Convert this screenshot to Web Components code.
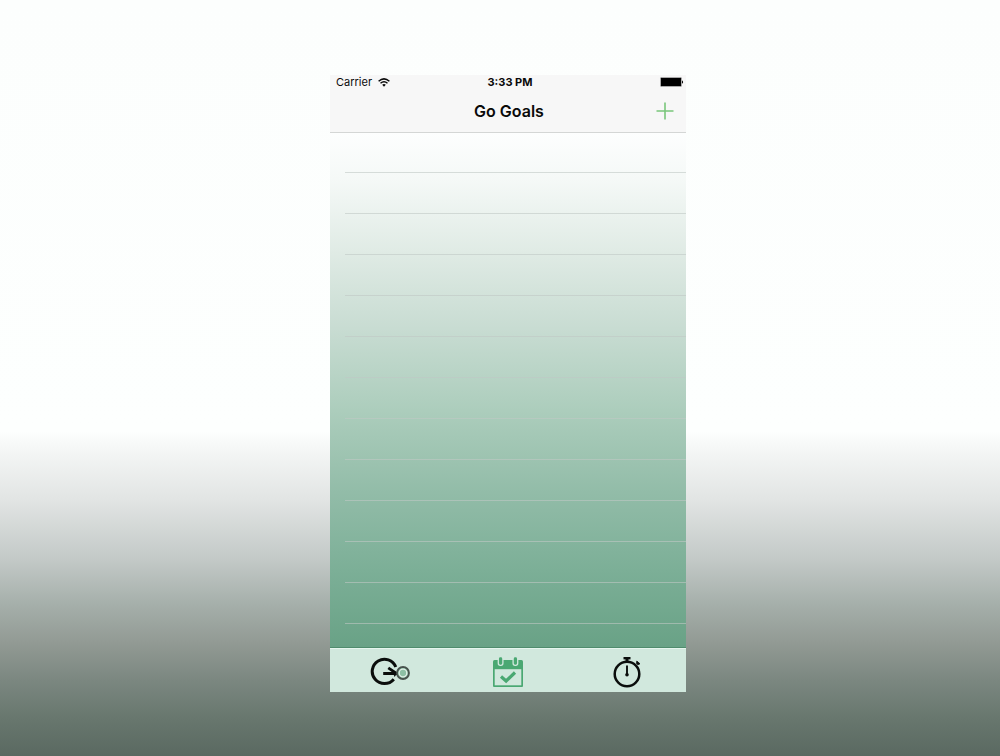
<!DOCTYPE html>
<html lang="en">
<head>
<meta charset="utf-8">
<meta name="viewport" content="width=device-width, initial-scale=1">
<title>Go Goals</title>
<style>
html { min-height: 100%; background: #fcfefd; }
body { margin: 0; min-height: 100vh; font-family: Inter, "Liberation Sans", sans-serif; color: #0a0a0a; }
</style>
</head>
<body>
<go-stage>
  <go-phone>
    <go-status slot="top" carrier="Carrier" time="3:33 PM"></go-status>
    <go-navbar slot="top">Go Goals</go-navbar>
    <go-list rows="12"></go-list>
    <go-tabbar slot="bottom"></go-tabbar>
  </go-phone>
</go-stage>
<script>
function define(name, render) {
  customElements.define(name, class extends HTMLElement {
    constructor() { super(); this.attachShadow({ mode: "open" }); }
    connectedCallback() { this.shadowRoot.innerHTML = render(this); }
  });
}

define("go-stage", () => `
<style>
:host { display: flex; justify-content: center; align-items: flex-start; box-sizing: border-box; min-height: 100vh; padding: 75px 0 64px 16px;
  background: linear-gradient(#fcfefd 0, #fdfffe 57%, #f3f5f4 60%, #e2e5e4 66%, #c3c9c7 74%, #a5afaa 80%, #929a94 85%, #7b8780 90%, #68776e 95%, #5a6961 100%); }
</style>
<slot></slot>`);

define("go-phone", () => `
<style>
:host { display: flex; flex-direction: column; width: 100%; max-width: 356px; }
header { background: #f7f7f7; border-bottom: 1px solid #d4d6d5; }
main { flex: 1; }
</style>
<header><slot name="top"></slot></header>
<main><slot></slot></main>
<slot name="bottom"></slot>`);

define("go-status", el => `
<style>
:host { display: grid; grid-template-columns: 1fr auto 1fr; align-items: center; height: 14px; padding: 0 2px 0 6px; font-size: 11px; line-height: 14px; }
.left { display: flex; align-items: center; gap: 6px; }
.time { font-weight: 700; }
.battery { justify-self: end; }
svg { display: block; }
</style>
<span class="left">${el.getAttribute("carrier")}
<svg width="12" height="9" viewBox="0 0 12 9" fill="none" stroke="#0a0a0a" stroke-width="1.5" aria-hidden="true"><path d="M.6 3.2Q6-1.4 11.4 3.2M2.5 5.3Q6 2.3 9.5 5.3"/><path d="M4.2 6.7Q6 5.3 7.8 6.7L6 8.8Z" fill="#0a0a0a" stroke="none"/></svg></span>
<span class="time">${el.getAttribute("time")}</span>
<svg class="battery" width="24" height="10" viewBox="0 0 24 10" aria-hidden="true"><rect x=".5" y=".5" width="21" height="9" rx="1" fill="#000" stroke="#aaa" stroke-width="1"/><path d="M22 3.200Q24.200 5 22 6.800Z"/></svg>`);

define("go-navbar", () => `
<style>
:host { display: grid; grid-template-columns: 1fr auto 1fr; align-items: center; height: 43px; padding: 0 12px 0 14px; }
h1 { grid-column: 2; margin: 0; font-size: 16px; line-height: 20px; font-weight: 600; }
button { justify-self: end; padding: 0; border: 0; background: none; cursor: pointer; color: #79c67b; }
svg { display: block; }
</style>
<h1><slot></slot></h1>
<button type="button" aria-label="Add goal"><svg width="18" height="18" viewBox="0 0 18 18" stroke="currentColor" stroke-width="1.6"><path d="M9 .5V17.5M.5 9H17.5"/></svg></button>`);

define("go-list", el => `
<style>
:host { display: block; background: linear-gradient(#fdfefe 0, #f5f9f7 9%, #e0ebe5 23%, #c8dcd2 38%, #accdbc 54%, #92bca8 70%, #7caf97 85%, #69a286 100%); }
ul { list-style: none; margin: 0; padding: 0 0 23px 15px; }
li { box-sizing: border-box; height: 41px; border-bottom: 1px solid rgba(192, 200, 197, .6); }
li:first-child { height: 40px; }
</style>
<ul>${"<li></li>".repeat(Number(el.getAttribute("rows")))}</ul>`);

define("go-tabbar", () => `
<style>
:host { display: block; border-top: 1px solid #4f8c6d; background: #d1e8dd; }
nav { display: grid; grid-template-columns: repeat(3, 1fr); gap: 1px; height: 44px; box-sizing: border-box; padding: 3px 0 0 1px; border-top: 1px solid #e5f6ee; }
button { display: grid; place-items: center; padding: 0; margin: 0; border: 0; background: none; color: #0b0e0c; cursor: pointer; }
button[aria-current] { color: #4aa872; }
svg { display: block; }
</style>
<nav aria-label="Sections">
<button type="button" aria-label="Go"><svg width="42" height="30" viewBox="0 0 42 30" fill="none" stroke="currentColor">
<path d="M26.800 10A12.200 12.200 0 1 0 24.800 22.200" stroke-width="3"/><path d="M14.200 16.500H28M19.300 10.800L27.500 16.500" stroke-width="2.800"/><path d="M24.500 17L28.500 16L25.500 20Z" fill="currentColor" stroke="none"/>
<circle cx="34" cy="16" r="6" fill="#83b99b" stroke="#48524d" stroke-width="1.800"/><circle cx="34" cy="16" r="3.800" fill="#8dbfa4" stroke="#e2efe8" stroke-width="1.300"/></svg></button>
<button type="button" aria-label="Goals" aria-current="page"><svg width="32" height="32" viewBox="0 0 32 32">
<path d="M1 5.5Q1 4 2.5 4H29.500Q31 4 31 5.500V30Q31 31 30 31H2Q1 31 1 30Z" fill="currentColor"/><path d="M2.700 13.200H29.300V29.300H2.700Z" fill="#d1e8dd"/>
<g fill="currentColor" stroke="#d1e8dd" stroke-width="1.300"><rect x="6.300" y=".7" width="4.600" height="8.600" rx="2"/><rect x="21.100" y=".7" width="4.600" height="8.600" rx="2"/></g>
<path d="M9 20.500L14.100 25L23 16.500" fill="none" stroke="currentColor" stroke-width="3.200"/></svg></button>
<button type="button" aria-label="Timer"><svg width="30" height="32" viewBox="0 0 30 32" fill="none" stroke="currentColor">
<circle cx="15" cy="18" r="12.300" stroke-width="2.500"/><path d="M11.500 2.200H18.500" stroke-width="2.400"/><path d="M15 2V6" stroke-width="3"/><path d="M15 9.500V18" stroke-width="1.900"/><circle cx="15" cy="18.700" r="1.800" fill="currentColor" stroke="none"/><path d="M24.800 5L28 7.800L25.800 8.800L24.500 7.600Z" fill="currentColor" stroke-width=".8"/></svg></button>
</nav>`);
</script>
</body>
</html>
